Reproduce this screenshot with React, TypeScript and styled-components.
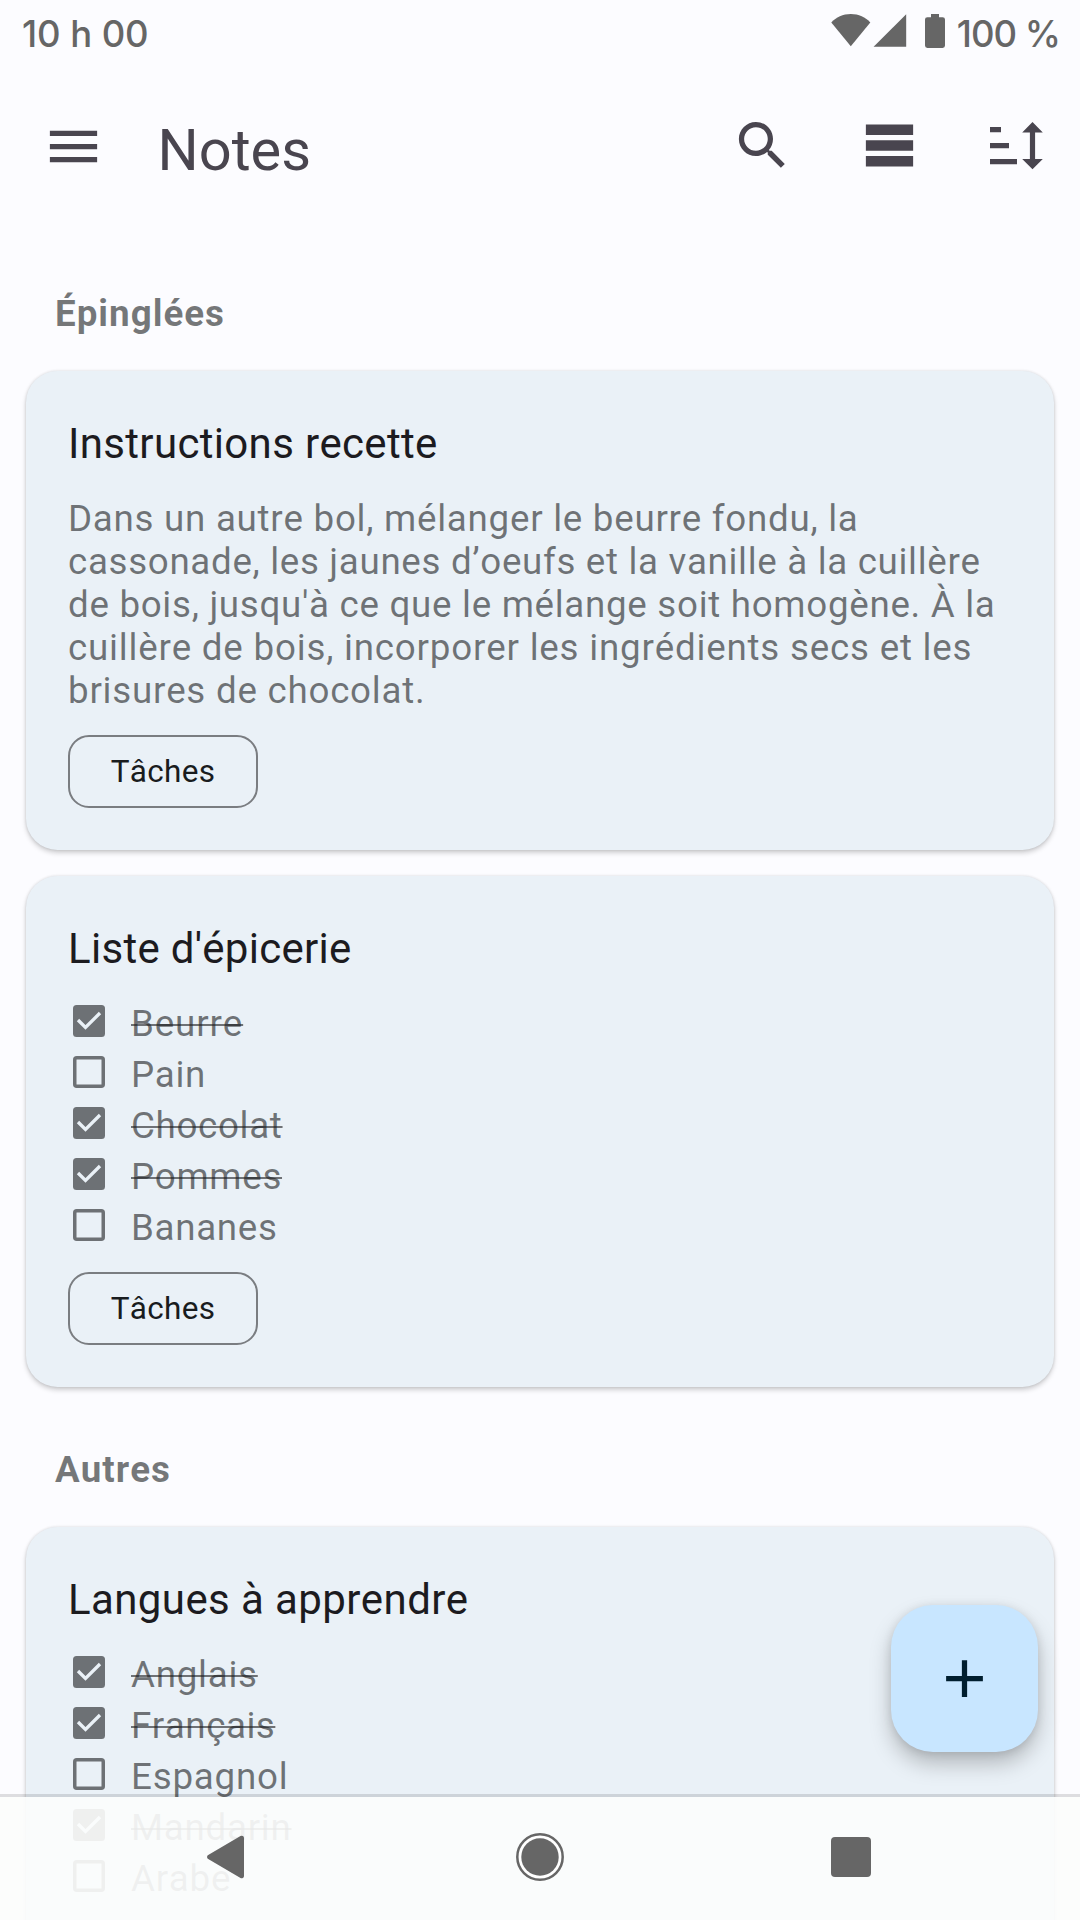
import React from "react";
import styled, { createGlobalStyle } from "styled-components";

const ink = "#49454f";
const system = "#666666";
const muted = "rgba(26, 28, 30, 0.6)";

const GlobalStyle = createGlobalStyle`
  *, *::before, *::after { box-sizing: border-box; }
  body { margin: 0; background: #fcfcff; }
`;

const Screen = styled.div`
  position: relative;
  display: flex;
  flex-direction: column;
  width: 1080px;
  height: 1920px;
  overflow: hidden;
  background: #fcfcff;
  font-family: Roboto, "Noto Sans", sans-serif;
  font-kerning: none;
`;

const StatusBar = styled.header`
  flex: none;
  display: flex;
  justify-content: space-between;
  align-items: flex-start;
  height: 63px;
  padding: 12px 20px 0 22px;
  color: ${system};
  font-family: Inter, sans-serif;
  font-weight: 500;
  font-size: 36.5px;
  line-height: 45px;
  white-space: pre;
`;

const Clock = styled.span`
  letter-spacing: -0.1px;
`;

const Indicators = styled.div`
  display: flex;
  align-items: flex-start;
  svg { display: block; margin-top: 1px; }
`;

const Percent = styled.span`
  margin-left: 12px;
  letter-spacing: -1px;
`;

const AppBar = styled.div`
  flex: none;
  display: flex;
  align-items: center;
  height: 168px;
  padding: 0 33px 0 42px;
`;

const Title = styled.h1`
  flex: 1;
  margin: 5px 0 0 52.5px;
  color: ${ink};
  font-size: 57.75px;
  font-weight: 400;
  line-height: 68px;
`;

const Actions = styled.div`
  display: flex;
  gap: 63px;
  margin-top: -3px;
`;

const IconButton = styled.button`
  display: block;
  width: 63px;
  height: 63px;
  padding: 0;
  border: 0;
  background: none;
  color: ${ink};
  svg { display: block; width: 63px; height: 63px; }
`;

const MenuButton = styled(IconButton)`
  margin-top: -1px;
`;

const SearchButton = styled(IconButton)`
  margin-right: 1px;
`;

const Content = styled.main`
  flex: none;
  display: flex;
  flex-direction: column;
  padding: 0 26px;
`;

const SectionTitle = styled.h2`
  margin: 0;
  padding: 61px 29px 36px;
  color: ${muted};
  font-size: 36.75px;
  font-weight: 700;
  line-height: 43px;
  letter-spacing: 1px;
`;

const Cards = styled.div`
  display: flex;
  flex-direction: column;
  gap: 26px;
`;

const Card = styled.article`
  display: flex;
  flex-direction: column;
  align-items: flex-start;
  padding: 48px 42px 42px;
  border-radius: 31.5px;
  background: #eaf1f7;
  box-shadow: 0 3px 5px rgba(0, 0, 0, 0.18), 0 0 3px rgba(0, 0, 0, 0.12);
`;

const CardTitle = styled.h3<{ $tracking: number }>`
  margin: 0;
  color: #1c1b1f;
  font-size: 42px;
  font-weight: 400;
  line-height: 49px;
  letter-spacing: ${(p) => p.$tracking}px;
`;

const Body = styled.p`
  margin: 29px 0 23px;
  color: ${muted};
  font-size: 36.75px;
  line-height: 43px;
  white-space: pre;
`;

const BodyLine = styled.span<{ $tracking: number }>`
  display: block;
  letter-spacing: ${(p) => p.$tracking}px;
`;

const List = styled.ul`
  margin: 25px 0 19px;
  padding: 0;
  list-style: none;
`;

const Item = styled.li`
  display: flex;
  align-items: flex-start;
  gap: 26px;
  height: 51px;
  padding: 4px 0 0 5px;
  color: ${muted};
  svg { display: block; margin-top: 3px; }
`;

const ItemText = styled.span<{ $done: boolean; $tracking: number }>`
  font-size: 36.75px;
  line-height: 43px;
  letter-spacing: ${(p) => p.$tracking}px;
  text-decoration: ${(p) => (p.$done ? "line-through" : "none")};
  text-decoration-thickness: 2px;
`;

const Chip = styled.span`
  display: flex;
  align-items: center;
  justify-content: center;
  width: 190px;
  height: 73px;
  border: 2px solid #7a7d81;
  border-radius: 21px;
  color: #191c1e;
  font-size: 31.5px;
  line-height: 37px;
  letter-spacing: 0.3px;
`;

const Fab = styled.button`
  position: absolute;
  right: 42px;
  bottom: 168px;
  display: flex;
  align-items: center;
  justify-content: center;
  width: 147px;
  height: 147px;
  padding: 0;
  border: 0;
  border-radius: 42px;
  background: #c8e6ff;
  color: #001e2e;
  box-shadow: 0 12px 22px -1px rgba(0, 0, 0, 0.25), 0 1px 10px rgba(0, 0, 0, 0.1);
`;

const NavBar = styled.nav`
  position: absolute;
  left: 0;
  right: 0;
  bottom: 0;
  display: flex;
  justify-content: space-between;
  align-items: center;
  height: 126px;
  padding: 0 198px 3px;
  border-top: 3px solid rgba(0, 0, 0, 0.12);
  background: rgba(252, 253, 252, 0.91);
  background-clip: padding-box;
  svg { display: block; }
`;

const Battery = styled.svg`
  margin-left: 18px;
`;

function CheckBox({ checked }: { checked: boolean }) {
  return checked ? (
    <svg width="32" height="32" viewBox="0 0 32 32">
      <rect width="32" height="32" rx="3.5" fill="#6d7175" />
      <path d="M5 15l7.5 7.5L27 8" fill="none" stroke="#eaf1f7" strokeWidth="3.3" />
    </svg>
  ) : (
    <svg width="32" height="32" viewBox="0 0 32 32">
      <rect x="1.75" y="1.75" width="28.5" height="28.5" rx="2" fill="none" stroke="#6d7175" strokeWidth="3.5" />
    </svg>
  );
}

type Line = { text: string; tracking: number };
type Entry = Line & { done: boolean };

function CheckList({ entries }: { entries: Entry[] }) {
  return (
    <List>
      {entries.map(({ text, done, tracking }) => (
        <Item key={text}>
          <CheckBox checked={done} />
          <ItemText $done={done} $tracking={tracking}>{text}</ItemText>
        </Item>
      ))}
    </List>
  );
}

const recipe: Line[] = [
  { text: "Dans un autre bol, mélanger le beurre fondu, la", tracking: 0.72 },
  { text: "cassonade, les jaunes d’oeufs et la vanille à la cuillère", tracking: 0.66 },
  { text: "de bois, jusqu'à ce que le mélange soit homogène. À la", tracking: 0.69 },
  { text: "cuillère de bois, incorporer les ingrédients secs et les", tracking: 0.78 },
  { text: "brisures de chocolat.", tracking: 0.74 },
];

const groceries: Entry[] = [
  { text: "Beurre", done: true, tracking: 0.85 },
  { text: "Pain", done: false, tracking: 0.66 },
  { text: "Chocolat", done: true, tracking: 0.66 },
  { text: "Pommes", done: true, tracking: 0.66 },
  { text: "Bananes", done: false, tracking: 0.66 },
];

const languages: Entry[] = [
  { text: "Anglais", done: true, tracking: 0.72 },
  { text: "Français", done: true, tracking: 0.52 },
  { text: "Espagnol", done: false, tracking: 0.78 },
  { text: "Mandarin", done: true, tracking: 0.72 },
  { text: "Arabe", done: false, tracking: 0.72 },
];

export default function App() {
  return (
    <Screen>
      <GlobalStyle />
      <StatusBar>
        <Clock>10 h 00</Clock>
        <Indicators>
          <svg width="76" height="36" viewBox="0 0 76 36" fill="currentColor">
            <path d="M0.3 9.6C5 4 12 1 19.8 1s14.8 3 19.5 8.6L19.8 33.3z" />
            <path d="M75.2 1.2V33.8H42.6z" />
          </svg>
          <Battery width="20" height="36" viewBox="0 0 20 36" fill="currentColor">
            <path d="M6 1h8v3.2h3.6A2.4 2.4 0 0 1 20 6.6V32.6A2.4 2.4 0 0 1 17.6 35H2.4A2.4 2.4 0 0 1 0 32.6V6.6A2.4 2.4 0 0 1 2.4 4.2H6z" />
          </Battery>
          <Percent>100 %</Percent>
        </Indicators>
      </StatusBar>

      <AppBar>
        <MenuButton aria-label="Menu">
          <svg viewBox="0 0 24 24" fill="currentColor">
            <path d="M3 18h18v-2H3v2zm0-5h18v-2H3v2zm0-7v2h18V6H3z" />
          </svg>
        </MenuButton>
        <Title>Notes</Title>
        <Actions>
          <SearchButton aria-label="Rechercher">
            <svg viewBox="0 0 24 24" fill="currentColor">
              <path d="M15.5 14h-.79l-.28-.27C15.41 12.59 16 11.11 16 9.5 16 5.91 13.09 3 9.5 3S3 5.91 3 9.5 5.91 16 9.5 16c1.61 0 3.09-.59 4.23-1.57l.27.28v.79l5 4.99L20.49 19l-4.99-5zm-6 0C7.01 14 5 11.99 5 9.5S7.01 5 9.5 5 14 7.01 14 9.5 11.99 14 9.5 14z" />
            </svg>
          </SearchButton>
          <IconButton aria-label="Affichage">
            <svg viewBox="0 0 24 24" fill="currentColor">
              <path d="M3 4h18v4H3zM3 10h18v4H3zM3 16h18v4H3z" />
            </svg>
          </IconButton>
          <IconButton aria-label="Trier">
            <svg viewBox="0 0 63 63" fill="currentColor">
              <path d="M6 13h11v5.3H6zM6 29h19v5.2H6zM6 45h27v5.2H6zM48.5 8l10.3 10.5H51.1V45h7.7L48.5 55.2 38.2 45h7.7V18.5h-7.7z" />
            </svg>
          </IconButton>
        </Actions>
      </AppBar>

      <Content>
        <SectionTitle>Épinglées</SectionTitle>
        <Cards>
          <Card>
            <CardTitle $tracking={0.33}>Instructions recette</CardTitle>
            <Body>
              {recipe.map((line) => (
                <BodyLine key={line.text} $tracking={line.tracking}>{line.text}</BodyLine>
              ))}
            </Body>
            <Chip>Tâches</Chip>
          </Card>
          <Card>
            <CardTitle $tracking={0.29}>Liste d'épicerie</CardTitle>
            <CheckList entries={groceries} />
            <Chip>Tâches</Chip>
          </Card>
        </Cards>
        <SectionTitle>Autres</SectionTitle>
        <Cards>
          <Card>
            <CardTitle $tracking={0.4}>Langues à apprendre</CardTitle>
            <CheckList entries={languages} />
          </Card>
        </Cards>
      </Content>

      <Fab aria-label="Ajouter">
        <svg width="63" height="63" viewBox="0 0 24 24" fill="currentColor">
          <path d="M19 13h-6v6h-2v-6H5v-2h6V5h2v6h6v2z" />
        </svg>
      </Fab>

      <NavBar>
        <svg width="54" height="48" viewBox="0 0 54 48" fill={system}>
          <path d="M10.2 22L42.5 3a2.3 2.3 0 0 1 3.5 2V43a2.3 2.3 0 0 1-3.5 2L10.2 26a2.3 2.3 0 0 1 0-4z" />
        </svg>
        <svg width="48" height="48" viewBox="0 0 48 48">
          <circle cx="24" cy="24" r="22.7" fill="#fff" stroke={system} strokeWidth="2.5" />
          <circle cx="24" cy="24" r="18.7" fill={system} />
        </svg>
        <svg width="54" height="48" viewBox="0 0 54 48" fill={system}>
          <rect x="3" y="4" width="40" height="40" rx="4" />
        </svg>
      </NavBar>
    </Screen>
  );
}
